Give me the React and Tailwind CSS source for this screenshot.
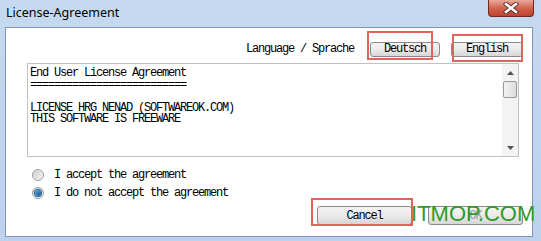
import React from "react";

const mono = { fontFamily: '"Liberation Mono", "DejaVu Sans Mono", monospace' };

function Btn({ children, className = "", textClass = "text-black" }) {
  return (
    <div
      className={
        "flex items-center justify-center rounded-[3px] border border-[#8a8a8a] bg-gradient-to-b from-[#f4f4f4] via-[#ebebeb] to-[#d6d6d6] text-[12px] tracking-[-1.2px] " +
        textClass +
        " " +
        className
      }
      style={mono}
    >
      {children}
    </div>
  );
}

function Radio({ checked }) {
  return (
    <div className="flex h-[12px] w-[12px] items-center justify-center rounded-full border border-[#9a9a9a] bg-gradient-to-br from-[#dcdcdc] to-[#f8f8f8]">
      {checked ? (
        <div className="h-[6px] w-[6px] rounded-full bg-gradient-to-br from-[#5db0e8] to-[#0c4f8c] ring-1 ring-[#1d5f99]" />
      ) : (
        <div className="h-[8px] w-[8px] rounded-full bg-gradient-to-br from-[#cfcfcf] to-[#f2f2f2]" />
      )}
    </div>
  );
}

export default function App() {
  return (
    <div className="relative h-[241px] w-[541px] overflow-hidden bg-gradient-to-b from-[#c5d9f0] to-[#bcd2ec]">
      {/* Title bar */}
      <div className="relative flex h-[27px] items-center pl-[6px]">
        <span
          className="text-[12.5px] leading-none text-black"
          style={{ fontFamily: '"Noto Sans", "Open Sans", sans-serif' }}
        >
          License-Agreement
        </span>
        <div className="absolute left-[488px] top-0 flex h-[17px] w-[46px] items-center justify-center rounded-b-[4px] border border-t-0 border-[#6e2a20] bg-gradient-to-b from-[#e9a99b] via-[#d2634f] to-[#c0412b]">
          <svg width="16" height="12" viewBox="0 0 16 12">
            <path
              d="M3 2 L13 10 M13 2 L3 10"
              stroke="#5a2a24"
              strokeWidth="4.4"
              strokeLinecap="square"
            />
            <path
              d="M3 2 L13 10 M13 2 L3 10"
              stroke="#ffffff"
              strokeWidth="2.6"
              strokeLinecap="square"
            />
          </svg>
        </div>
      </div>

      {/* Client area */}
      <div className="ml-[5px] mr-[8px] h-[210px] border border-[#8196b2] bg-white">
        {/* header row */}
        <div className="flex items-center justify-end pr-[9px] pt-[12px]">
          <span className="mr-[16px] text-[12px] tracking-[-1.2px] text-black" style={mono}>
            Language / Sprache
          </span>
          <Btn className="h-[15px] w-[70px]">Deutsch</Btn>
          <Btn className="ml-[11px] h-[15px] w-[72px]">English</Btn>
        </div>

        {/* text box */}
        <div className="ml-[21px] mt-[5px] flex h-[94px] w-[492px] border border-[#c2c2c2]">
          <div
            className="flex-1 whitespace-pre pl-[2px] pt-[4px] text-[12px] leading-[11.5px] tracking-[-1.2px] text-black"
            style={mono}
          >
            {"End User License Agreement\n==========================\n\nLICENSE HRG NENAD (SOFTWAREOK.COM)\nTHIS SOFTWARE IS FREEWARE"}
          </div>
          <div className="flex w-[16px] flex-col items-center bg-[#f3f3f3]">
            <div className="flex h-[17px] w-full items-center justify-center">
              <svg width="7" height="4" viewBox="0 0 7 4">
                <path d="M0 4 L3.5 0 L7 4 Z" fill="#555" />
              </svg>
            </div>
            <div className="h-[17px] w-[14px] rounded-[2px] border border-[#9a9a9a] bg-gradient-to-r from-[#f2f2f2] to-[#dcdcdc]" />
            <div className="flex-1" />
            <div className="flex h-[17px] w-full items-center justify-center">
              <svg width="7" height="4" viewBox="0 0 7 4">
                <path d="M0 0 L7 0 L3.5 4 Z" fill="#555" />
              </svg>
            </div>
          </div>
        </div>

        {/* radios */}
        <div className="ml-[26px] mt-[12px] flex flex-col gap-[6px]">
          <div className="flex h-[12px] items-center">
            <Radio checked={false} />
            <span className="ml-[10px] text-[12px] tracking-[-1.2px] text-black" style={mono}>
              I accept the agreement
            </span>
          </div>
          <div className="flex h-[12px] items-center">
            <Radio checked />
            <span className="ml-[10px] text-[12px] tracking-[-1.2px] text-black" style={mono}>
              I do not accept the agreement
            </span>
          </div>
        </div>

        {/* bottom buttons */}
        <div className="mt-[7px] flex justify-end pr-[9px]">
          <Btn className="h-[19px] w-[95px]">Cancel</Btn>
          <Btn className="ml-[16px] h-[19px] w-[95px]" textClass="text-[#9a9a9a]">
            OK
          </Btn>
        </div>
      </div>

      {/* highlight overlays */}
      <div className="absolute left-[367px] top-[31px] h-[29px] w-[66px] border-2 border-[#e0645a]" />
      <div className="absolute left-[452px] top-[34px] h-[28px] w-[71px] border-2 border-[#e0645a]" />
      <div className="absolute left-[311px] top-[198px] h-[28px] w-[102px] border-2 border-[#e0645a]" />

      {/* watermark */}
      <div
        className="absolute left-[411px] top-[201px] text-[22px] leading-[25px] text-[#2f9a2a]"
        style={{ fontFamily: '"Liberation Sans", Arial, sans-serif' }}
      >
        ITMOP.COM
      </div>
    </div>
  );
}
